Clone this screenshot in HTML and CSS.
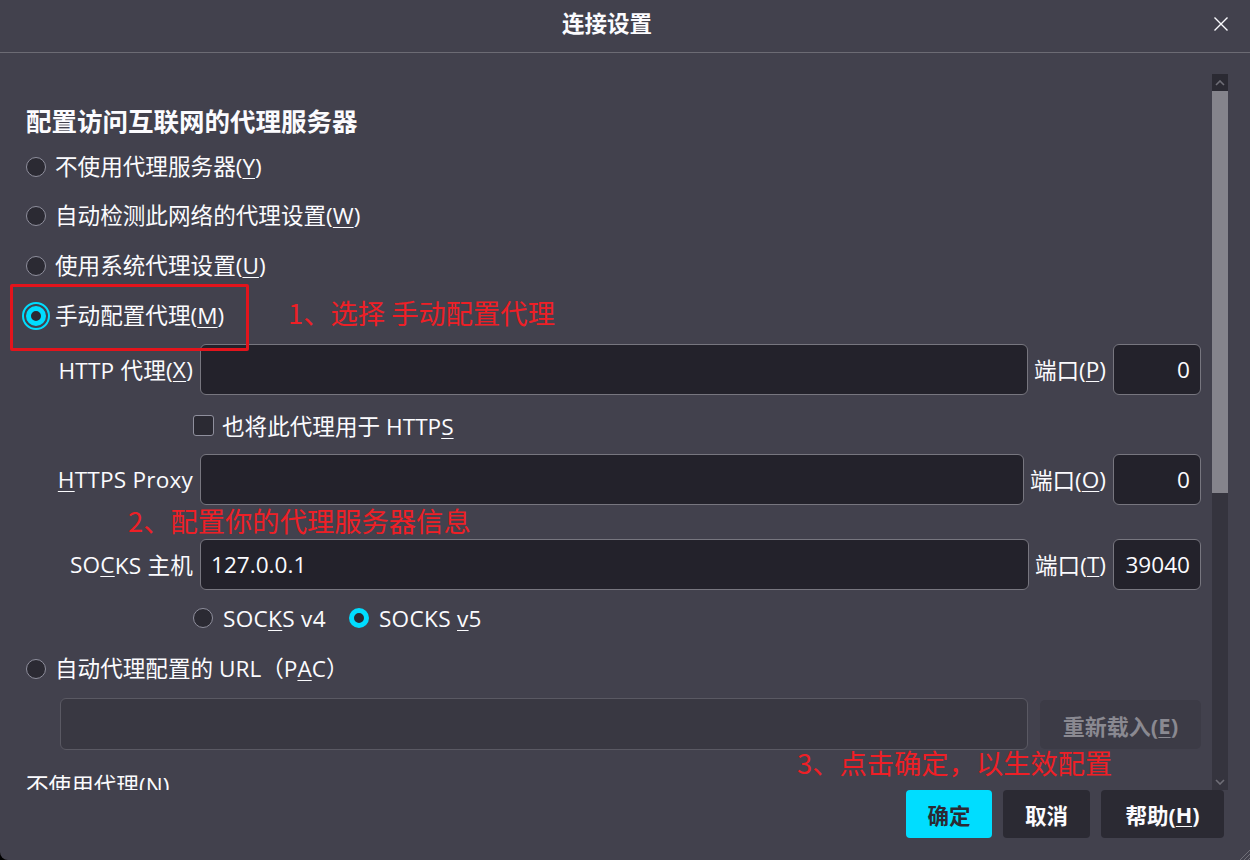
FILE: index.html
```html
<!DOCTYPE html>
<html lang="zh-CN">
<head>
<meta charset="utf-8">
<title>连接设置</title>
<link rel="stylesheet" href="styles.css">
</head>
<body>
<div class="window">
  <header class="titlebar">
    <h1 class="title">连接设置</h1>
    <span class="close" aria-label="关闭">
      <svg width="16" height="16" viewBox="0 0 16 16"><path d="M1.5 1.5 L14.5 14.5 M14.5 1.5 L1.5 14.5" stroke="#fbfbfe" stroke-width="1.4" fill="none"/></svg>
    </span>
  </header>

  <div class="main">
    <div class="scroll">
      <div class="content">
        <h2 class="heading">配置访问互联网的代理服务器</h2>
        <div class="radio-row first"><span class="radio"></span><span>不使用代理服务器(<u>Y</u>)</span></div>
        <div class="radio-row"><span class="radio"></span><span>自动检测此网络的代理设置(<u>W</u>)</span></div>
        <div class="radio-row"><span class="radio"></span><span>使用系统代理设置(<u>U</u>)</span></div>
        <div class="radio-row"><span class="radio checked focused"></span><span>手动配置代理(<u>M</u>)</span></div>

        <div class="proxy-row r-http">
          <span class="plabel">HTTP 代理(<u>X</u>)</span>
          <span class="field"></span>
          <span class="portlabel">端口(<u>P</u>)</span>
          <span class="field port">0</span>
        </div>
        <div class="check-row"><span class="checkbox"></span><span>也将此代理用于 HTTP<u>S</u></span></div>
        <div class="proxy-row r-https">
          <span class="plabel"><u>H</u>TTPS Proxy</span>
          <span class="field"></span>
          <span class="portlabel">端口(<u>O</u>)</span>
          <span class="field port">0</span>
        </div>
        <div class="proxy-row r-socks">
          <span class="plabel">SO<u>C</u>KS 主机</span>
          <span class="field value">127.0.0.1</span>
          <span class="portlabel">端口(<u>T</u>)</span>
          <span class="field port">39040</span>
        </div>
        <div class="socks-row">
          <span class="radio"></span><span class="sv">SOC<u>K</u>S v4</span>
          <span class="radio checked"></span><span>SOCKS <u>v</u>5</span>
        </div>
        <div class="radio-row pac"><span class="radio"></span><span>自动代理配置的 URL（P<u>A</u>C）</span></div>
        <div class="pac-row">
          <span class="field disabled"></span>
          <span class="reload">重新载入(<u>E</u>)</span>
        </div>
        <div class="noproxy">不使用代理(<u>N</u>)</div>
      </div>
      <div class="scrollbar">
        <span class="sb-btn"><svg width="10" height="6" viewBox="0 0 10 6"><path d="M1 5 L5 1 L9 5" stroke="#6f6e77" stroke-width="1.6" fill="none"/></svg></span>
        <span class="sb-thumb"></span>
        <span class="sb-track"></span>
        <span class="sb-btn down"><svg width="10" height="6" viewBox="0 0 10 6"><path d="M1 1 L5 5 L9 1" stroke="#6f6e77" stroke-width="1.6" fill="none"/></svg></span>
      </div>
    </div>

    <footer class="footer">
      <span class="btn primary">确定</span>
      <span class="btn">取消</span>
      <span class="btn help">帮助(<u>H</u>)</span>
    </footer>
  </div>

  <div class="mark-box"></div>
  <div class="note note1">1、选择 手动配置代理</div>
  <div class="note note2">2、配置你的代理服务器信息</div>
  <div class="note note3">3、点击确定，以生效配置</div>
  <svg class="grip" width="12" height="12" viewBox="0 0 12 12"><path d="M12 2 L2 12 M12 6 L6 12 M12 10 L10 12" stroke="#6f6e77" stroke-width="1"/></svg>
</div>
</body>
</html>
```

FILE: styles.css
```css
* { box-sizing: border-box; }

html, body {
  margin: 0;
  padding: 0;
  background: #000;
}

body {
  font-family: "Segoe UI", "Open Sans", "Noto Sans CJK SC", sans-serif;
  color: #fbfbfe;
  font-size: 22.6px;
}

.window {
  position: relative;
  width: 1250px;
  height: 860px;
  background: #42414d;
  border-bottom-left-radius: 8px;
  display: flex;
  flex-direction: column;
  overflow: hidden;
}

.titlebar {
  height: 53px;
  flex: none;
  border-bottom: 1px solid #6c6b74;
  display: flex;
  align-items: center;
  justify-content: center;
  padding-right: 36px;
  position: relative;
}

.title {
  margin: 0;
  font-size: 22.5px;
  font-weight: 700;
  line-height: 1;
  margin-top: -4px;
}

.close {
  position: absolute;
  right: 21px;
  top: 16px;
  width: 16px;
  height: 16px;
  display: flex;
}

.main {
  flex: 1;
  display: flex;
  flex-direction: column;
  padding-top: 21px;
}

.scroll {
  height: 716px;
  flex: none;
  display: flex;
  overflow: hidden;
}

.content {
  flex: 1;
  padding: 30px 11px 0 26px;
  overflow: hidden;
}

.heading {
  margin: 0;
  font-size: 25.5px;
  font-weight: 700;
  line-height: 34px;
  height: 34px;
}

.radio-row {
  height: 50px;
  display: flex;
  align-items: center;
  gap: 9px;
  line-height: 1;
  white-space: nowrap;
}
.radio-row.first {
  height: 48px;
  margin-top: 5px;
}
.radio-row.pac {
  margin-top: 3px;
}

u {
  text-decoration: underline;
  text-underline-offset: 3px;
  text-decoration-thickness: 1px;
}

.radio {
  width: 20px;
  height: 20px;
  flex: none;
  border-radius: 50%;
  background: #2b2a33;
  border: 1px solid #8f8f9d;
}
.radio.checked {
  border: 5px solid #00ddff;
  background: #2b2a33;
}
.radio.focused {
  outline: 2px solid #00ddff;
  outline-offset: 2px;
}

.proxy-row {
  height: 51px;
  display: flex;
  align-items: stretch;
}
.r-http { margin-top: 3px; }
.r-https { margin-top: 4px; }
.r-socks { margin-top: 34px; }

.plabel {
  width: 167px;
  flex: none;
  display: flex;
  align-items: center;
  justify-content: flex-end;
  white-space: nowrap;
  margin-right: 7px;
  letter-spacing: 0.2px;
}

.field {
  flex: 1;
  background: #23222b;
  border: 1px solid #77767f;
  border-radius: 6px;
  display: flex;
  align-items: center;
}
.field.value { padding-left: 10px; }
.field.port {
  flex: none;
  width: 88px;
  justify-content: flex-end;
  padding-right: 10px;
}
.field.disabled {
  background: #393842;
  border-color: #5a5963;
}

.portlabel {
  display: flex;
  align-items: center;
  white-space: nowrap;
  margin: 0 7px 0 6px;
}

.check-row {
  height: 50px;
  margin-top: 5px;
  padding-left: 167px;
  display: flex;
  align-items: center;
  gap: 8px;
}
.checkbox {
  width: 21px;
  height: 21px;
  border: 1px solid #8f8f9d;
  border-radius: 3px;
  background: #2b2a33;
  flex: none;
}

.socks-row {
  height: 46px;
  margin-top: 5px;
  padding-left: 167px;
  display: flex;
  align-items: center;
}
.socks-row .radio { margin-right: 10px; }
.socks-row .sv { margin-right: 23px; }
.socks-row span { letter-spacing: 0.3px; }

.pac-row {
  height: 52px;
  margin-top: 4px;
  padding-left: 34px;
  display: flex;
  gap: 12px;
}
.reload {
  width: 161px;
  flex: none;
  background: #3c3b46;
  border-radius: 5px;
  color: #8a8991;
  font-weight: 700;
  font-size: 22px;
  display: flex;
  align-items: center;
  justify-content: center;
  margin: 2px 0 1px;
}

.noproxy {
  margin-top: 22px;
  line-height: 28px;
  white-space: nowrap;
}

.scrollbar {
  width: 16px;
  flex: none;
  margin-right: 22px;
  display: flex;
  flex-direction: column;
}
.sb-btn {
  height: 17px;
  background: #2b2a33;
  display: flex;
  align-items: center;
  justify-content: center;
  flex: none;
}
.sb-btn.down { background: #35343e; }
.sb-thumb {
  height: 402px;
  background: #85848c;
  flex: none;
}
.sb-track {
  flex: 1;
  background: #35343e;
}

.footer {
  flex: 1;
  display: flex;
  justify-content: flex-end;
  align-items: flex-start;
  gap: 11px;
  padding-right: 26px;
}
.btn {
  height: 48px;
  width: 87px;
  border-radius: 4px;
  background: #2b2a33;
  color: #fbfbfe;
  font-weight: 700;
  font-size: 21.5px;
  display: flex;
  align-items: center;
  justify-content: center;
}
.btn.primary {
  width: 86px;
  background: #00ddff;
  color: #2b2a33;
}
.btn.help { width: 123px; }

.mark-box {
  position: absolute;
  left: 10px;
  top: 284px;
  width: 239px;
  height: 67px;
  border: 3px solid #e3141c;
  border-radius: 2px;
}

.note {
  position: absolute;
  color: #ee1f26;
  font-family: "Noto Sans CJK SC", sans-serif;
  font-size: 27.3px;
  line-height: 36px;
  white-space: nowrap;
}
.note1 { left: 288px; top: 294px; }
.note2 { left: 128px; top: 502px; }
.note3 { left: 797px; top: 744px; }

.grip {
  position: absolute;
  right: 0;
  bottom: 0;
}
```
